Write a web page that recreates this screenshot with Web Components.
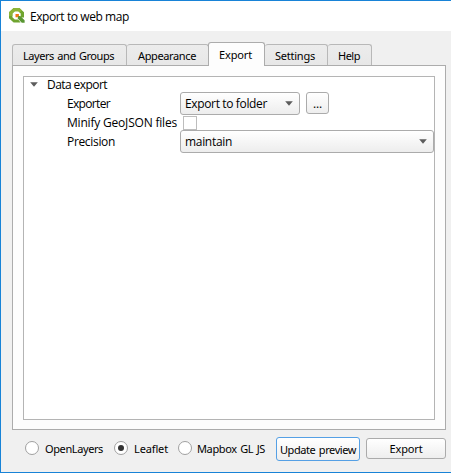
<!DOCTYPE html>
<html lang="en"><head><meta charset="utf-8"><title>Export to web map</title>
<style>html,body{margin:0;height:100%;overflow:hidden}body{font:12px/16px "Open Sans","Noto Sans",sans-serif;color:#000}</style></head><body>
<export-dialog></export-dialog>
<script>
const attach=(el,html)=>{el.attachShadow({mode:'open'}).innerHTML=html;};
// Single-line label whose tracking is adjusted to a fixed text width.
customElements.define('ui-label',class extends HTMLElement{
  connectedCallback(){
    attach(this,`<style>:host{display:block;white-space:nowrap;flex:none}span{display:inline-block}</style><span></span>`);
    const s=this.shadowRoot.querySelector('span');s.textContent=this.getAttribute('text');
    const w=+this.getAttribute('w');this.style.width=w+'px';
    const n=s.textContent.length;s.style.letterSpacing=((w-s.getBoundingClientRect().width)/n)+'px';
  }
});
customElements.define('app-logo',class extends HTMLElement{
  constructor(){super();attach(this,`<style>:host{display:block;width:16px;height:16px}svg{display:block}</style>
  <svg width="16" height="16" viewBox="0 0 16 16"><path d="M4.6 0h5.8L15 4.2v5.3h-3.3V5.6L9.4 3.3H5.8L3.4 5.6v3.6l2.4 2.4h3.4l2.4 2.9H4.6L0 10.2V4.3z" fill="#6fa42f"/><path d="M4.6 0h5.8L13 2.4 10.6 4.5 9.4 3.3H5.8L3.4 5.6V8H0V4.3z" fill="#8bb437"/><path d="M8.8 8.1h2.5l4.3 4.2v2.5h-2.8L8.8 10.6z" fill="#589632"/><path d="M6.5 5.9h3.4v1.8L8.4 9.2H6.5z" fill="#ee7913"/></svg>`)}
});
customElements.define('ui-arrow',class extends HTMLElement{
  constructor(){super();attach(this,`<style>:host{display:block;width:8px;height:5px}svg{display:block}</style><svg width="8" height="5"><path d="M.2.3h7.6L4 4.7z" fill="#5c5c5c"/></svg>`)}
});
customElements.define('ui-tab',class extends HTMLElement{
  constructor(){super();attach(this,`<style>:host{display:block;box-sizing:border-box;height:21px;border:1px solid #b8b8b8;border-width:1px 1px 0 0;border-radius:3px 3px 0 0;background:linear-gradient(#ececec,#e7e7e7);padding:3px 0 0 11px}
  :host([first]){border-left-width:1px;padding-left:10px}
  :host([active]){height:24px;margin:0 0 -1px -1px;border-color:#acacac;border-left-width:1px;background:#fdfdfd;padding:4px 0 0 10px;z-index:1}</style><slot></slot>`)}
});
customElements.define('ui-button',class extends HTMLElement{
  constructor(){super();attach(this,`<style>:host{display:flex;box-sizing:border-box;align-items:center;justify-content:center;border:1px solid #ababab;border-radius:3px;background:linear-gradient(#fff,#eee);flex:none}:host([focused]){border-color:#55a0e5}</style><slot></slot>`)}
});
customElements.define('ui-select',class extends HTMLElement{
  constructor(){super();attach(this,`<style>:host{display:flex;box-sizing:border-box;height:23px;align-items:center;justify-content:space-between;border:1px solid #ababab;border-radius:3px;background:linear-gradient(#fff,#ededed);padding:0 6px 0 4px;flex:none}</style><slot></slot><ui-arrow></ui-arrow>`)}
});
customElements.define('ui-radio',class extends HTMLElement{
  constructor(){super();attach(this,`<style>:host{display:flex;gap:6px;align-items:center;flex:none}i{box-sizing:border-box;width:14px;height:14px;border:1px solid #a0a0a0;border-radius:50%;background:#fff;display:grid;place-items:center}:host([checked]) i::after{content:"";width:6px;height:6px;border-radius:50%;background:#333}</style><i></i><slot></slot>`)}
});
customElements.define('export-dialog',class extends HTMLElement{
  constructor(){super();attach(this,`<style>
  :host{display:flex;flex-direction:column;box-sizing:border-box;width:451px;height:473px;background:#f0f0f0;border:solid #1883d7;border-width:1px 0 1px 1px}
  header{height:30px;background:#fff;display:flex;align-items:center;gap:5px;padding-left:8px;flex:none}
  header ui-label{padding-top:1px}
  nav{margin:11px 0 0 11px;height:23px;display:flex;align-items:flex-end;flex:none}
  nav,footer{font-family:"Noto Sans","Open Sans",sans-serif;font-size:11px;word-spacing:1px}
  .panel{box-sizing:border-box;margin-left:11px;width:434px;height:365px;border:1px solid #acacac;background:#fdfdfd;padding:10px;flex:none}
  .tree{box-sizing:border-box;width:412px;height:344px;border:1px solid #b4b4b4;background:#fff}
  .row{display:flex;align-items:center;height:23px;box-sizing:border-box}
  .row.head{height:15px;padding-left:6px;gap:9px}.name{width:156px;box-sizing:border-box;padding-left:43px;flex:none}
  .check{box-sizing:border-box;width:14px;height:14px;border:1px solid #bdbdbd;background:#fff;margin-left:3px}
  footer{display:flex;align-items:center;height:24px;margin-top:7px;padding-left:24px;flex:none}
  footer ui-radio{height:16px;margin-bottom:2px}
  </style>
  <header><app-logo></app-logo><ui-label text="Export to web map" w="99"></ui-label></header>
  <nav><ui-tab first style="width:115px"><ui-label text="Layers and Groups" w="91"></ui-label></ui-tab><ui-tab style="width:82px"><ui-label text="Appearance" w="58"></ui-label></ui-tab><ui-tab active style="width:57px"><ui-label text="Export" w="33"></ui-label></ui-tab><ui-tab style="width:63px;padding-left:10px"><ui-label text="Settings" w="40"></ui-label></ui-tab><ui-tab style="width:44px;padding-left:10px"><ui-label text="Help" w="22"></ui-label></ui-tab></nav>
  <section class="panel"><div class="tree">
   <div class="row head"><ui-arrow></ui-arrow><ui-label text="Data export" w="60" style="padding-top:1px"></ui-label></div>
   <div class="row"><div class="name"><ui-label text="Exporter" w="43" style="padding-top:1px"></ui-label></div><ui-select style="width:120px"><ui-label text="Export to folder" w="82" style="padding-top:1px"></ui-label></ui-select><ui-button style="width:23px;height:22px;margin-left:6px;align-self:flex-start"><ui-label text="..." w="9" style="padding-top:1px"></ui-label></ui-button></div>
   <div class="row" style="height:15px"><div class="name"><ui-label text="Minify GeoJSON files" w="110" style="padding-top:1px"></ui-label></div><div class="check"></div></div>
   <div class="row"><div class="name"><ui-label text="Precision" w="48" style="padding-top:1px"></ui-label></div><ui-select style="width:254px"><ui-label text="maintain" w="47" style="padding-top:1px"></ui-label></ui-select></div>
  </div></section>
  <footer><ui-radio><ui-label text="OpenLayers" w="58" style="padding-top:1px"></ui-label></ui-radio><ui-radio checked style="margin-left:11px"><ui-label text="Leaflet" w="34" style="padding-top:1px"></ui-label></ui-radio><ui-radio style="margin-left:10px;gap:5px"><ui-label text="Mapbox GL JS" w="68" style="padding-top:1px"></ui-label></ui-radio><ui-button focused style="width:84px;height:24px;margin-left:11px"><ui-label text="Update preview" w="76" style="padding-top:1px"></ui-label></ui-button><ui-button style="width:80px;height:21px;margin-left:6px;margin-bottom:1px"><ui-label text="Export" w="33" style="padding-top:1px"></ui-label></ui-button></footer>`)}
});
</script></body></html>
